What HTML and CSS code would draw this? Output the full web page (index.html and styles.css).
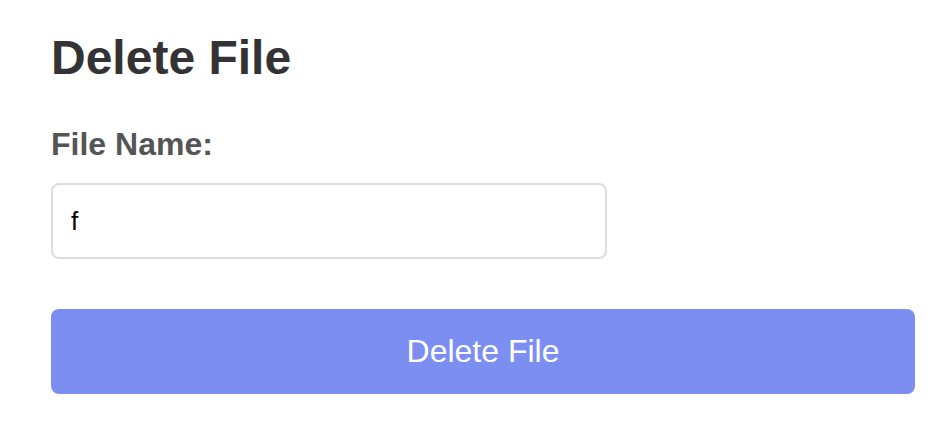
FILE: index.html
```html
<!DOCTYPE html>
<html>
<head>
<meta charset="utf-8">
<link rel="stylesheet" href="styles.css">
</head>
<body>
<div class="page">
  <h1 class="title">Delete File</h1>
  <form class="form">
    <label class="label" for="fname">File Name:</label>
    <input class="input" id="fname" type="text" value="f">
    <button class="button" type="button">Delete File</button>
  </form>
</div>
</body>
</html>
```
FILE: styles.css
```css
* { box-sizing: border-box; }
html, body { margin: 0; padding: 0; background: #fff; }
body { font-family: "Liberation Sans", Arial, sans-serif; }
.page { padding: 30px 27px 0 51px; }
.title {
  margin: 0;
  font-size: 48px;
  font-weight: bold;
  color: #333;
  line-height: normal;
}
.form { display: flex; flex-direction: column; align-items: flex-start; }
.label {
  margin-top: 41px;
  font-size: 32px;
  font-weight: bold;
  color: #555;
  line-height: normal;
}
.input {
  margin-top: 20px;
  width: 556px;
  height: 76px;
  border: 2px solid #ddd;
  border-radius: 8px;
  padding: 0 18px;
  font-family: "Liberation Sans", Arial, sans-serif;
  font-size: 26px;
  color: #000;
  outline: none;
}
.button {
  margin-top: 50px;
  width: 100%;
  height: 85px;
  border: none;
  border-radius: 8px;
  background: #7c8ef2;
  color: #fff;
  font-family: "Liberation Sans", Arial, sans-serif;
  font-size: 32px;
}
```
